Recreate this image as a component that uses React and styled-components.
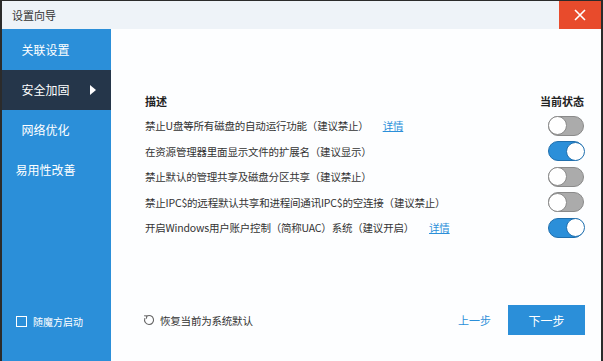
import React, { useState } from "react";
import styled, { createGlobalStyle } from "styled-components";

const Global = createGlobalStyle`
  html, body { margin: 0; padding: 0; background: #2a2a2a; }
  body { font-family: "Noto Sans CJK SC", "Noto Sans", sans-serif; }
  * { box-sizing: border-box; }
`;

const Window = styled.div`
  width: 603px;
  height: 361px;
  border-left: 2px solid #2b2b2b;
  border-right: 2px solid #2b2b2b;
  border-top: 1px solid #2b2b2b;
  display: flex;
  flex-direction: column;
  overflow: hidden;
`;

const TitleBar = styled.div`
  height: 28px;
  background: #eef3f8;
  display: flex;
  align-items: center;
  padding-left: 10px;
  font-size: 11px;
  color: #333;
`;

const Title = styled.span`
  flex: 1;
`;

const CloseBtn = styled.div`
  width: 42px;
  height: 28px;
  background: #e84b2c;
  display: flex;
  align-items: center;
  justify-content: center;
`;

const Body = styled.div`
  flex: 1;
  display: flex;
  min-height: 0;
`;

const Sidebar = styled.div`
  width: 109px;
  background: #2b8fd9;
  display: flex;
  flex-direction: column;
  padding-top: 1px;
`;

const NavItem = styled.div`
  position: relative;
  height: 40px;
  line-height: 40px;
  padding-right: 22px;
  text-align: center;
  font-size: 12px;
  color: #fff;
  background: ${(p) => (p.$active ? "#25364a" : "transparent")};
`;

const Arrow = styled.span`
  position: absolute;
  right: 15px;
  top: 15px;
  width: 0;
  height: 0;
  border-top: 5px solid transparent;
  border-bottom: 5px solid transparent;
  border-left: 6px solid #fff;
`;

const SideFooter = styled.label`
  margin-top: auto;
  padding: 0 0 33px 14px;
  display: flex;
  align-items: center;
  gap: 6px;
  height: 47px;
  font-size: 10px;
  color: #fff;
`;

const CheckBox = styled.span`
  width: 11px;
  height: 11px;
  border: 1.5px solid #fff;
  display: inline-block;
`;

const Content = styled.div`
  flex: 1;
  background: #fdfeff;
  display: flex;
  flex-direction: column;
  padding: 60px 17px 0 34px;
`;

const HeaderRow = styled.div`
  height: 24px;
  display: flex;
  align-items: center;
  justify-content: space-between;
  font-size: 11px;
  font-weight: bold;
  color: #222;
`;

const Row = styled.div`
  height: 25.5px;
  display: flex;
  align-items: center;
  font-size: 10.5px;
  letter-spacing: -0.2px;
  color: #333;
`;

const RowText = styled.span`
  flex: 1;
  display: flex;
  align-items: center;
`;

const Detail = styled.a`
  color: #2b8fd9;
  text-decoration: underline;
  margin-left: ${(p) => p.$gap}px;
  cursor: pointer;
`;

const Toggle = styled.div`
  width: 36px;
  height: 20px;
  border-radius: 10px;
  background: ${(p) => (p.$on ? "#2b8fd9" : "#ababab")};
  border: 1.5px solid ${(p) => (p.$on ? "#1f6fae" : "#8a8a8a")};
  display: flex;
  justify-content: ${(p) => (p.$on ? "flex-end" : "flex-start")};
  align-items: center;
  cursor: pointer;
`;

const Knob = styled.span`
  width: 19px;
  height: 19px;
  border-radius: 50%;
  background: #fff;
  border: 1.5px solid ${(p) => (p.$on ? "#1f6fae" : "#8a8a8a")};
  margin: 0 -1.5px;
`;

const Footer = styled.div`
  margin-top: auto;
  margin-left: -2px;
  display: flex;
  align-items: center;
  height: 56px;
  padding-bottom: 26px;
`;

const Restore = styled.div`
  display: flex;
  align-items: center;
  gap: 5px;
  font-size: 10.5px;
  letter-spacing: -0.2px;
  color: #333;
  flex: 1;
`;

const PrevBtn = styled.span`
  font-size: 11px;
  color: #2b8fd9;
  margin-right: 17px;
`;

const NextBtn = styled.div`
  width: 77px;
  height: 30px;
  background: #2b8fd9;
  color: #fff;
  font-size: 12px;
  display: flex;
  align-items: center;
  justify-content: center;
  margin-right: -1px;
`;

const rows = [
  { text: "禁止U盘等所有磁盘的自动运行功能（建议禁止）", detail: 14, on: false },
  { text: "在资源管理器里面显示文件的扩展名（建议显示）", on: true },
  { text: "禁止默认的管理共享及磁盘分区共享（建议禁止）", on: false },
  { text: "禁止IPC$的远程默认共享和进程间通讯IPC$的空连接（建议禁止）", on: false },
  { text: "开启Windows用户账户控制（简称UAC）系统（建议开启）", detail: 15, on: true },
];

export default function App() {
  const [states, setStates] = useState(rows.map((r) => r.on));
  return (
    <>
      <Global />
      <Window>
        <TitleBar>
          <Title>设置向导</Title>
          <CloseBtn>
            <svg width="12" height="12" viewBox="0 0 12 12">
              <path d="M1 1L11 11M11 1L1 11" stroke="#fff" strokeWidth="1.6" />
            </svg>
          </CloseBtn>
        </TitleBar>
        <Body>
          <Sidebar>
            <NavItem>关联设置</NavItem>
            <NavItem $active>
              安全加固
              <Arrow />
            </NavItem>
            <NavItem>网络优化</NavItem>
            <NavItem>易用性改善</NavItem>
            <SideFooter>
              <CheckBox />
              随魔方启动
            </SideFooter>
          </Sidebar>
          <Content>
            <HeaderRow>
              <span>描述</span>
              <span>当前状态</span>
            </HeaderRow>
            {rows.map((r, i) => (
              <Row key={i}>
                <RowText>
                  {r.text}
                  {r.detail && <Detail $gap={r.detail}>详情</Detail>}
                </RowText>
                <Toggle
                  $on={states[i]}
                  onClick={() => setStates((s) => s.map((v, j) => (j === i ? !v : v)))}
                >
                  <Knob $on={states[i]} />
                </Toggle>
              </Row>
            ))}
            <Footer>
              <Restore>
                <svg width="12" height="12" viewBox="0 0 24 24" fill="none" stroke="#666" strokeWidth="2.2" strokeLinecap="round">
                  <path d="M7.5 4.2A9 9 0 1 1 3.6 9" />
                  <path d="M3 3.5L7.8 4L6.8 8.6" />
                </svg>
                恢复当前为系统默认
              </Restore>
              <PrevBtn>上一步</PrevBtn>
              <NextBtn>下一步</NextBtn>
            </Footer>
          </Content>
        </Body>
      </Window>
    </>
  );
}
